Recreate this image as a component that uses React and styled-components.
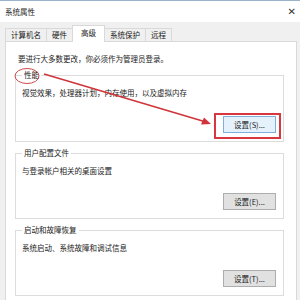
import React from "react";
import styled, { createGlobalStyle } from "styled-components";

const Global = createGlobalStyle`
  html, body { margin: 0; padding: 0; background: #f0f0f0; }
  body { font-family: "Noto Sans CJK SC", "Noto Sans", sans-serif; color: #1a1a1a; }
`;

const Window = styled.div`
  position: relative;
  width: 300px;
  height: 300px;
  overflow: hidden;
  display: flex;
  flex-direction: column;
  background: #f0f0f0;
`;

const TitleBar = styled.div`
  height: 21px;
  flex: none;
  background: #fff;
  border-top: 1px solid #9bb4cc;
  display: flex;
  align-items: center;
  justify-content: space-between;
  padding: 0 4px 0 5px;
  font-size: 7.5px;
  line-height: 10px;
`;

const Close = styled.span`
  font-family: "DejaVu Sans", sans-serif;
  font-size: 10px;
  color: #333;
`;

const Body = styled.div`
  flex: 1;
  display: flex;
  flex-direction: column;
  padding: 4px 3px 0 5px;
`;

const TabRow = styled.div`
  display: flex;
  align-items: flex-end;
  height: 16px;
  position: relative;
  z-index: 1;
  margin-bottom: -1px;
`;

const Tab = styled.div`
  height: ${(p) => (p.$active ? "17px" : "14px")};
  padding: 0 ${(p) => (p.$active ? "8px" : "5px")};
  background: ${(p) => (p.$active ? "#fff" : "#f0f0f0")};
  border: 1px solid #d9d9d9;
  border-bottom: ${(p) => (p.$active ? "none" : "1px solid #d9d9d9")};
  border-left: ${(p) => (p.$first || p.$active ? "1px solid #d9d9d9" : "none")};
  border-right: ${(p) => (p.$beforeActive ? "none" : "1px solid #d9d9d9")};
  box-sizing: border-box;
  display: flex;
  align-items: center;
  font-size: 7.5px;
  line-height: 10px;
  white-space: nowrap;
  padding-bottom: ${(p) => (p.$active ? "2px" : "0")};
`;

const Panel = styled.div`
  flex: 1;
  background: #fff;
  border: 1px solid #d9d9d9;
  border-bottom: none;
  display: flex;
  flex-direction: column;
  gap: 6px;
  padding: 12px 12px 0 9px;
`;

const Intro = styled.div`
  font-size: 7.5px;
  line-height: 10px;
  padding-left: 3px;
  white-space: nowrap;
`;

const Group = styled.fieldset`
  margin: 0;
  padding: 8px 7px 8px 6px;
  border: 1px solid #dcdcdc;
  display: flex;
  flex-direction: column;
  min-width: 0;
`;

const Legend = styled.legend`
  font-size: 7.5px;
  line-height: 10px;
  padding: 0 2px;
  margin-left: 0;
`;

const Desc = styled.div`
  font-size: 7.5px;
  line-height: 10px;
  white-space: nowrap;
`;

const ButtonWrap = styled.div`
  position: relative;
  align-self: flex-end;
  margin-top: ${(p) => p.$gap}px;
`;

const Button = styled.div`
  width: 53px;
  height: 17px;
  box-sizing: border-box;
  display: flex;
  align-items: center;
  justify-content: center;
  font-size: 7.5px;
  line-height: 10px;
  background: ${(p) => (p.$focus ? "#e5f1fb" : "#e1e1e1")};
  border: 1px solid ${(p) => (p.$focus ? "#7fb0dc" : "#adadad")};
  white-space: nowrap;
`;

const Highlight = styled.div`
  position: absolute;
  left: -9px;
  top: -3px;
  right: -5px;
  bottom: -6px;
  border: 2px solid #d8373f;
  box-sizing: border-box;
  pointer-events: none;
`;

const Annotation = styled.svg`
  position: absolute;
  left: 0;
  top: 0;
  pointer-events: none;
`;

const tabs = ["计算机名", "硬件", "高级", "系统保护", "远程"];
const activeIdx = 2;

export default function App() {
  return (
    <>
      <Global />
      <Window>
        <TitleBar>
          <span>系统属性</span>
          <Close>✕</Close>
        </TitleBar>
        <Body>
          <TabRow>
            {tabs.map((t, i) => (
              <Tab
                key={t}
                $active={i === activeIdx}
                $first={i === 0}
                $beforeActive={i === activeIdx - 1}
              >
                {t}
              </Tab>
            ))}
          </TabRow>
          <Panel>
            <Intro>要进行大多数更改，你必须作为管理员登录。</Intro>
            <Group>
              <Legend>性能</Legend>
              <Desc>视觉效果，处理器计划，内存使用，以及虚拟内存</Desc>
              <ButtonWrap $gap={18}>
                <Button $focus>设置(S)...</Button>
                <Highlight />
              </ButtonWrap>
            </Group>
            <Group>
              <Legend>用户配置文件</Legend>
              <Desc>与登录帐户相关的桌面设置</Desc>
              <ButtonWrap $gap={17}>
                <Button>设置(E)...</Button>
              </ButtonWrap>
            </Group>
            <Group>
              <Legend>启动和故障恢复</Legend>
              <Desc>系统启动、系统故障和调试信息</Desc>
              <ButtonWrap $gap={17}>
                <Button>设置(T)...</Button>
              </ButtonWrap>
            </Group>
          </Panel>
        </Body>
        <Annotation width="300" height="300" viewBox="0 0 300 300">
          <ellipse cx="27" cy="76" rx="12" ry="7.5" fill="none" stroke="#d04848" strokeWidth="1" />
          <line x1="44" y1="74" x2="206" y2="122" stroke="#d0343a" strokeWidth="1.5" />
          <polygon points="211,124 201,124.5 204,117.5" fill="#d0343a" />
        </Annotation>
      </Window>
    </>
  );
}
